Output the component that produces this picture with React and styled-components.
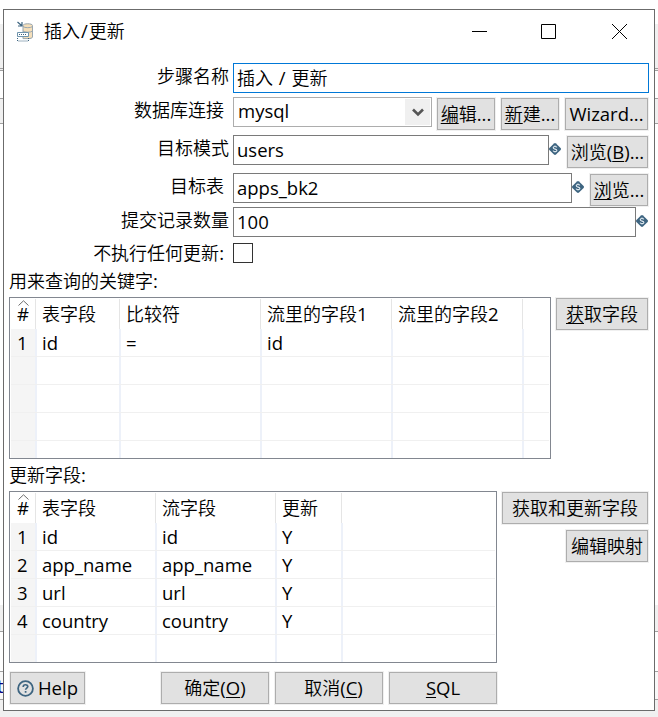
import React from "react";
import styled, { createGlobalStyle } from "styled-components";

const Global = createGlobalStyle`
  * { box-sizing: border-box; }
  body { margin: 0; overflow: hidden; }
`;

const Desktop = styled.div`
  position: relative;
  width: 658px;
  height: 717px;
  padding: 9px 3px 6px;
  color: #000;
  font: 350 18px/24px "Noto Sans CJK SC", sans-serif;
  background: linear-gradient(
    #fff 24px, #f0f0f0 24px 68px, #a0a0a0 68px 69px, #f0f0f0 69px 70px, #a0a0a0 70px 71px,
    #fff 71px 98px, #a0a0a0 98px 99px, #f0f0f0 99px 123px, #a0a0a0 123px 124px,
    #fff 124px 605px, #f0f0f0 605px 631px, #a0a0a0 631px 632px, #fff 632px 671px,
    #a0a0a0 671px 672px, #f8f8f8 672px 699px, #a0a0a0 699px 700px, #f0f0f0 700px
  );
`;

const BehindText = styled.span`
  position: absolute;
  left: -3px;
  top: 673px;
  color: #000080;
  font: 400 18.5px/26px "Open Sans", sans-serif;
`;

const Latin = styled.span`
  font-family: "Open Sans", sans-serif;
  font-size: 18.5px;
  font-weight: 400;
  line-height: 1;
`;

const Slash = styled(Latin)`
  margin: 0 1px;
`;

const Dialog = styled.main`
  position: relative;
  width: 652px;
  height: 702px;
  border: 1px solid #6b6b6b;
  background: #fff;
`;

const TitleBar = styled.header`
  display: flex;
  align-items: center;
  height: 43px;
  margin-bottom: 10px;
  padding-left: 13px;
`;

const Title = styled.h1`
  flex: 1;
  margin: -3px 0 0 10px;
  font-size: 18px;
  font-weight: 350;
`;

const WindowControls = styled.div`
  display: flex;
  gap: 54px;
  margin-right: 26px;
`;

const WindowGlyph = styled.svg`
  display: block;
  width: ${(p) => p.$w}px;
  height: 15px;
`;

const Row = styled.div`
  display: flex;
  align-items: flex-start;
  height: ${(p) => p.$h}px;
`;

const Label = styled.label`
  flex: none;
  width: 229px;
  padding-right: ${(p) => p.$inset ?? 4}px;
  text-align: right;
  white-space: nowrap;
  line-height: ${(p) => p.$lh ?? 24}px;
`;

const Field = styled.div`
  width: ${(p) => p.$w}px;
  height: 30px;
  padding-left: 3px;
  border: 1px solid ${(p) => (p.$focus ? "#0078d7" : "#7a7a7a")};
  line-height: 26px;
  white-space: pre;
`;

const Combo = styled.div`
  display: flex;
  justify-content: space-between;
  width: 199px;
  height: 30px;
  padding: 1px 1px 1px 4px;
  border: 1px solid #adadad;
  line-height: 23px;
`;

const ComboArrow = styled.span`
  display: flex;
  align-items: center;
  justify-content: center;
  width: 25px;
  background: #f0f0f0;
`;

const Button = styled.button`
  display: flex;
  flex: none;
  align-items: center;
  justify-content: center;
  width: ${(p) => p.$w}px;
  height: 32px;
  margin: ${(p) => p.$m ?? "0"};
  padding: 0;
  border: 1px solid #adadad;
  outline: 1px solid #f0f0f0;
  background: #e1e1e1;
  color: #000;
  font: inherit;
  white-space: nowrap;
`;

const Caption = styled.span`
  padding: 0 0 2px ${(p) => p.$shift ?? 0}px;
  line-height: 28px;
`;

const Key = styled.span`
  text-decoration: underline;
  text-decoration-thickness: 1px;
  text-underline-offset: 2px;
`;

const CheckBox = styled.span`
  width: 20px;
  height: 20px;
  margin-top: 1px;
  border: 1px solid #333;
`;

const VarMark = styled.svg`
  flex: none;
  width: 12px;
  height: 12px;
  margin-top: 8px;
`;

const SectionTitle = styled.div`
  height: ${(p) => p.$h}px;
  padding-left: 5px;
  line-height: ${(p) => p.$lh}px;
`;

const Section = styled.section`
  display: flex;
  justify-content: space-between;
  height: ${(p) => p.$h}px;
  padding: 0 6px 0 5px;
`;

const Table = styled.div`
  width: ${(p) => p.$w}px;
  height: ${(p) => p.$h}px;
  padding: 1px;
  overflow: hidden;
  border: 1px solid #828790;
`;

const TableRow = styled.div`
  display: grid;
  grid-template-columns: ${(p) => p.$cols} 1fr;
  grid-template-rows: 100%;
  height: ${(p) => p.$h ?? 28}px;
`;

const HeadCell = styled.div`
  position: relative;
  padding-left: 6px;
  border-right: ${(p) => (p.$end ? "0" : "1px solid #e5e5e5")};
  line-height: 29px;
  white-space: nowrap;
`;

const SortMark = styled.svg`
  position: absolute;
  left: 7px;
  top: 1px;
  width: 11px;
  height: 6px;
`;

const Cell = styled.div`
  padding-left: 6px;
  border-bottom: 1px solid #f0f0f0;
  box-shadow: ${(p) => (p.$end ? "none" : "inset -1px 0 #edf1f9, 1px 0 #edf1f9")};
  background: ${(p) => (p.$index ? "#f5f5f5" : "transparent")};
  line-height: 27px;
  white-space: nowrap;
`;

const ButtonStack = styled.div`
  display: flex;
  flex-direction: column;
  align-items: flex-end;
  gap: 6px;
  padding-top: 1px;
`;

const Footer = styled.footer`
  display: flex;
  gap: 6px;
  padding-left: 6px;
`;

const HelpIcon = styled.svg`
  width: 17px;
  height: 17px;
  margin-right: 4px;
`;

function Variable() {
  return (
    <VarMark viewBox="0 0 12 12">
      <path d="M5 .4Q6-.4 7 .4L11.6 5Q12.4 6 11.6 7L7 11.6Q6 12.4 5 11.6L.4 7Q-.4 6 .4 5Z" fill="#3d6480" />
      <path d="M7.8 4.4C7.5 3.2 4.2 3.1 4.2 4.8S7.9 5.8 7.9 7.4 4.4 8.8 4.1 7.6M6 2.4v1.2M6 8.4v1.2" fill="none" stroke="#e6eef3" strokeWidth="1.1" />
    </VarMark>
  );
}

function DataTable({ width, height, cols, heads, rows }) {
  const template = cols.map((c) => c + "px").join(" ");
  const last = heads.length;
  return (
    <Table $w={width} $h={height}>
      <TableRow $cols={template} $h={30}>
        {[...heads, ""].map((h, i) => (
          <HeadCell key={i} $end={i === last}>
            {i === 0 ? (
              <>
                <SortMark viewBox="0 0 11 6">
                  <path d="M.5 5.5 5.5 .8 10.5 5.5" fill="none" stroke="#6d6d6d" />
                </SortMark>
                <Latin>{h}</Latin>
              </>
            ) : (
              h.split(/(\d)/).map((s, k) => (k % 2 ? <Latin key={k}>{s}</Latin> : s))
            )}
          </HeadCell>
        ))}
      </TableRow>
      {rows.map((r, n) => (
        <TableRow key={n} $cols={template}>
          {[...heads, ""].map((_, i) => (
            <Cell key={i} $index={i === 0} $end={i === last}>
              <Latin>{r[i]}</Latin>
            </Cell>
          ))}
        </TableRow>
      ))}
    </Table>
  );
}

const SIDE = "1px 0 0 6px";

export default function App() {
  return (
    <Desktop>
      <Global />
      <BehindText>t</BehindText>
      <Dialog>
        <TitleBar>
          <svg width="17" height="21" viewBox="0 0 17 21" fill="none">
            <path d="M6 4.5C6 2.2 15.5 2.2 15.5 4.5V16c0 1-2 1.6-4 1.6H6Z" fill="#f5dfba" stroke="#9aa7b0" />
            <path d="M6 5.5c1.5 1.6 8 1.6 9.5 0M6 10c1.5 1.6 8 1.6 9.5 0" stroke="#9aa7b0" />
            <path d="M.5 1 4.5 4.5M5 1v4H1" stroke="#3d6480" strokeWidth="1.2" />
            <path d="M.5 11.5h11v4H.5Z" fill="#fff" stroke="#6f94ad" />
            <path d="M2 13.5h8M.5 17v3h11v-3" stroke="#3d6480" strokeDasharray="1 1" />
          </svg>
          <Title>插入<Slash>/</Slash>更新</Title>
          <WindowControls>
            <WindowGlyph $w={15}><path d="M0 7.5h15" stroke="#000" /></WindowGlyph>
            <WindowGlyph $w={15}><path d="M.5.5h14v14H.5Z" fill="none" stroke="#000" /></WindowGlyph>
            <WindowGlyph $w={18}><path d="m2 0 15 15M17 0 2 15" stroke="#000" /></WindowGlyph>
          </WindowControls>
        </TitleBar>

        <Row $h={34}>
          <Label>步骤名称</Label>
          <Field $w={416} $focus>插入<Slash> / </Slash>更新</Field>
        </Row>
        <Row $h={38}>
          <Label $inset={9}>数据库连接</Label>
          <Combo>
            <span><Latin>mysql</Latin></span>
            <ComboArrow>
              <svg width="12" height="9"><path d="m1 1.5 5 5 5-5" fill="none" stroke="#555" strokeWidth="2.6" /></svg>
            </ComboArrow>
          </Combo>
          <Button $w={58} $m="1px 0 0 5px"><Caption><Key>编</Key>辑<Latin>...</Latin></Caption></Button>
          <Button $w={58} $m={SIDE}><Caption><Key>新</Key>建<Latin>...</Latin></Caption></Button>
          <Button $w={83} $m={SIDE}><Caption><Latin>Wizard...</Latin></Caption></Button>
        </Row>
        <Row $h={38}>
          <Label>目标模式</Label>
          <Field $w={316}><Latin>users</Latin></Field>
          <Variable />
          <Button $w={81} $m={SIDE}><Caption>浏览<Latin>(<Key>B</Key>)...</Latin></Caption></Button>
        </Row>
        <Row $h={34}>
          <Label $inset={9}>目标表</Label>
          <Field $w={339}><Latin>apps_bk2</Latin></Field>
          <Variable />
          <Button $w={58} $m={SIDE}><Caption><Key>浏</Key>览<Latin>...</Latin></Caption></Button>
        </Row>
        <Row $h={35}>
          <Label>提交记录数量</Label>
          <Field $w={403}><Latin>100</Latin></Field>
          <Variable />
        </Row>
        <Row $h={27}>
          <Label $inset={9} $lh={21}>不执行任何更新<Latin>:</Latin></Label>
          <CheckBox />
        </Row>

        <SectionTitle $h={28} $lh={23}>用来查询的关键字<Latin>:</Latin></SectionTitle>
        <Section $h={162}>
          <DataTable
            width={542}
            height={162}
            cols={[25, 84, 141, 131, 131]}
            heads={["#", "表字段", "比较符", "流里的字段1", "流里的字段2"]}
            rows={[["1", "id", "=", "id"], [], [], [], []]}
          />
          <ButtonStack>
            <Button $w={92}><Caption><Key>获</Key>取字段</Caption></Button>
          </ButtonStack>
        </Section>

        <SectionTitle $h={32} $lh={31}>更新字段<Latin>:</Latin></SectionTitle>
        <Section $h={181}>
          <DataTable
            width={488}
            height={172}
            cols={[25, 120, 120, 66]}
            heads={["#", "表字段", "流字段", "更新"]}
            rows={[
              ["1", "id", "id", "Y"],
              ["2", "app_name", "app_name", "Y"],
              ["3", "url", "url", "Y"],
              ["4", "country", "country", "Y"],
              [],
            ]}
          />
          <ButtonStack>
            <Button $w={146}><Caption>获取和更新字段</Caption></Button>
            <Button $w={82}><Caption>编辑映射</Caption></Button>
          </ButtonStack>
        </Section>

        <Footer>
          <Button $w={75} $m="0 70px 0 0">
            <HelpIcon viewBox="0 0 17 17" fill="none" stroke="#3d6480">
              <circle cx="8.5" cy="8.5" r="7.4" strokeWidth="1.8" />
              <path d="M6.2 7c0-3 4.6-2.8 4.6-.4 0 1.5-2.2 1.5-2.2 3.2M8.6 11v1.8" strokeWidth="1.7" />
            </HelpIcon>
            <Caption><Latin>Help</Latin></Caption>
          </Button>
          <Button $w={108}><Caption>确定<Latin>(<Key>O</Key>)</Latin></Caption></Button>
          <Button $w={108}><Caption $shift={9}>取消<Latin>(<Key>C</Key>)</Latin></Caption></Button>
          <Button $w={108}><Caption><Latin><Key>S</Key>QL</Latin></Caption></Button>
        </Footer>
      </Dialog>
    </Desktop>
  );
}
